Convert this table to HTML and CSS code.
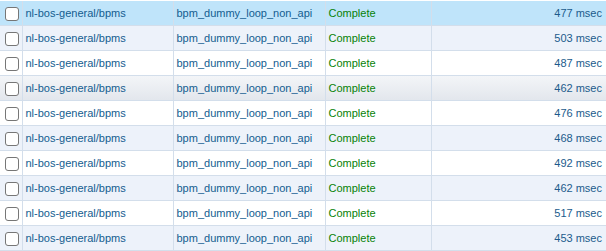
FILE: index.html
```html
<!DOCTYPE html>
<html>
<head>
<meta charset="utf-8">
<link rel="stylesheet" href="styles.css">
</head>
<body>
<table class="grid">
  <colgroup><col class="w-check"><col class="w-repo"><col class="w-name"><col class="w-status"><col class="w-time"></colgroup>
  <tr class="row selected"><td class="c-check"><span class="box"></span></td><td class="c-repo">nl-bos-general/bpms</td><td class="c-name">bpm_dummy_loop_non_api</td><td class="c-status">Complete</td><td class="c-time">477 msec</td></tr>
  <tr class="row alt"><td class="c-check"><span class="box"></span></td><td class="c-repo">nl-bos-general/bpms</td><td class="c-name">bpm_dummy_loop_non_api</td><td class="c-status">Complete</td><td class="c-time">503 msec</td></tr>
  <tr class="row"><td class="c-check"><span class="box"></span></td><td class="c-repo">nl-bos-general/bpms</td><td class="c-name">bpm_dummy_loop_non_api</td><td class="c-status">Complete</td><td class="c-time">487 msec</td></tr>
  <tr class="row hover"><td class="c-check"><span class="box"></span></td><td class="c-repo">nl-bos-general/bpms</td><td class="c-name">bpm_dummy_loop_non_api</td><td class="c-status">Complete</td><td class="c-time">462 msec</td></tr>
  <tr class="row"><td class="c-check"><span class="box"></span></td><td class="c-repo">nl-bos-general/bpms</td><td class="c-name">bpm_dummy_loop_non_api</td><td class="c-status">Complete</td><td class="c-time">476 msec</td></tr>
  <tr class="row alt"><td class="c-check"><span class="box"></span></td><td class="c-repo">nl-bos-general/bpms</td><td class="c-name">bpm_dummy_loop_non_api</td><td class="c-status">Complete</td><td class="c-time">468 msec</td></tr>
  <tr class="row"><td class="c-check"><span class="box"></span></td><td class="c-repo">nl-bos-general/bpms</td><td class="c-name">bpm_dummy_loop_non_api</td><td class="c-status">Complete</td><td class="c-time">492 msec</td></tr>
  <tr class="row alt"><td class="c-check"><span class="box"></span></td><td class="c-repo">nl-bos-general/bpms</td><td class="c-name">bpm_dummy_loop_non_api</td><td class="c-status">Complete</td><td class="c-time">462 msec</td></tr>
  <tr class="row"><td class="c-check"><span class="box"></span></td><td class="c-repo">nl-bos-general/bpms</td><td class="c-name">bpm_dummy_loop_non_api</td><td class="c-status">Complete</td><td class="c-time">517 msec</td></tr>
  <tr class="row alt"><td class="c-check"><span class="box"></span></td><td class="c-repo">nl-bos-general/bpms</td><td class="c-name">bpm_dummy_loop_non_api</td><td class="c-status">Complete</td><td class="c-time">453 msec</td></tr>
</table>
</body>
</html>
```
FILE: styles.css
```css
html, body {
  margin: 0;
  padding: 0;
  background: #ffffff;
}
.grid {
  border-collapse: collapse;
  width: 606px;
  table-layout: fixed;
  font-family: "Liberation Sans", Arial, sans-serif;
  font-size: 11px;
  margin-top: 1px;
}
.w-check { width: 22px; }
.w-repo { width: 151px; }
.w-name { width: 152px; }
.w-status { width: 106px; }
.w-time { width: 175px; }
.grid td {
  height: 24px;
  padding: 0 0 0 3px;
  border-bottom: 1px solid #d3deeb;
  border-left: 1px solid #d3deeb;
  white-space: nowrap;
  overflow: hidden;
  vertical-align: middle;
}
.grid td:first-child {
  border-left: none;
}
.row {
  background: #ffffff;
}
.row.alt {
  background: #edf2fa;
}
.row.hover {
  background: linear-gradient(#f3f5f8, #e2e6ec);
}
.row.selected {
  background: #bfe4fa;
}
.c-repo, .c-name {
  color: #135d90;
}
.c-status {
  color: #078207;
}
.grid td.c-time {
  text-align: right;
  color: #1b5b8c;
  padding-right: 4px;
}
.box {
  display: block;
  width: 14px;
  height: 14px;
  margin: 2px 0 0 2px;
  box-sizing: border-box;
  border: 1px solid #767676;
  border-radius: 3px;
  background: #ffffff;
}
```
